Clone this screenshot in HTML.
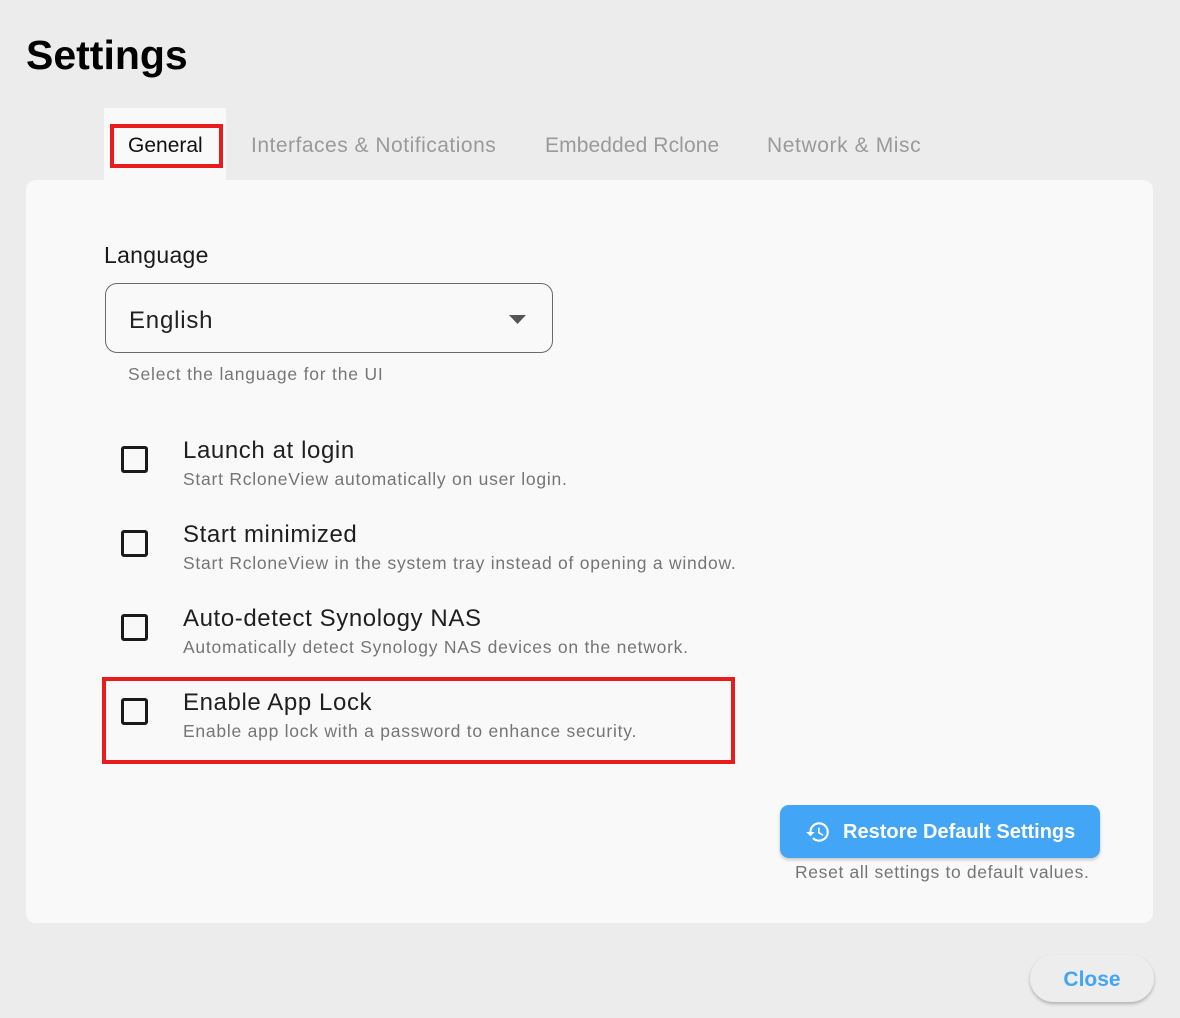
<!DOCTYPE html>
<html><head><meta charset="utf-8"><style>
*{margin:0;padding:0;box-sizing:border-box}
body{width:1180px;height:1018px;background:#ececec;font-family:"Liberation Sans",sans-serif;position:relative;overflow:hidden;color:#1a1a1a}
.a{position:absolute;white-space:nowrap}
.title{left:26px;top:32px;font-size:41px;font-weight:bold;color:#000}
.tabact{left:104px;top:108px;width:122px;height:74px;background:#f9f9f9}
.card{left:26px;top:180px;width:1127px;height:743px;background:#f9f9f9;border-radius:10px}
.tab{top:134px;font-size:21px;color:#9a9a9a;letter-spacing:0.4px}
.red{border:4px solid #e81c1c}
.sel{left:105px;top:283px;width:448px;height:70px;border:1.5px solid #6a6a6a;border-radius:12px}
.cb{left:121px;width:27px;height:27px;border:3px solid #1a1a1a;border-radius:3px}
.t{left:183px;font-size:24px;color:#1f1f1f;letter-spacing:0.6px}
.d{left:183px;font-size:17.5px;color:#757575;letter-spacing:0.75px}
.btn{left:780px;top:805px;width:320px;height:53px;background:#42a5f5;border-radius:9px;box-shadow:0 2px 3px rgba(0,0,0,.2);color:#fff;font-size:20px;font-weight:bold}
.close{left:1030px;top:955px;width:124px;height:47px;border-radius:24px;background:#ededed;box-shadow:0 2px 3px rgba(0,0,0,.25);color:#42a5f5;font-size:21px;font-weight:bold;text-align:center;line-height:49px}
</style></head><body>
<div class="a title">Settings</div>
<div class="a card"></div>
<div class="a tabact"></div>
<div class="a red" style="left:110px;top:124px;width:113px;height:44px"></div>
<div class="a tab" style="left:128px;color:#111;letter-spacing:0">General</div>
<div class="a tab" style="left:251px;letter-spacing:0.5px">Interfaces &amp; Notifications</div>
<div class="a tab" style="left:545px;letter-spacing:0.1px">Embedded Rclone</div>
<div class="a tab" style="left:767px;letter-spacing:0.6px">Network &amp; Misc</div>

<div class="a" style="left:104px;top:242px;font-size:23px;color:#1a1a1a;letter-spacing:0.3px">Language</div>
<div class="a sel"></div>
<div class="a" style="left:129px;top:307px;font-size:24px;color:#222;letter-spacing:0.8px">English</div>
<svg class="a" style="left:509px;top:315px" width="17" height="9"><path d="M0 0H17L8.5 9Z" fill="#555"/></svg>
<div class="a" style="left:128px;top:364px;font-size:17.5px;color:#777;letter-spacing:0.8px">Select the language for the UI</div>

<div class="a cb" style="top:446px"></div>
<div class="a t" style="top:437px">Launch at login</div>
<div class="a d" style="top:469px">Start RcloneView automatically on user login.</div>

<div class="a cb" style="top:530px"></div>
<div class="a t" style="top:521px">Start minimized</div>
<div class="a d" style="top:553px">Start RcloneView in the system tray instead of opening a window.</div>

<div class="a cb" style="top:614px"></div>
<div class="a t" style="top:605px">Auto-detect Synology NAS</div>
<div class="a d" style="top:637px">Automatically detect Synology NAS devices on the network.</div>

<div class="a cb" style="top:698px"></div>
<div class="a t" style="top:689px">Enable App Lock</div>
<div class="a d" style="top:721px">Enable app lock with a password to enhance security.</div>
<div class="a red" style="left:102px;top:677px;width:633px;height:87px"></div>

<div class="a btn">
<svg class="a" style="left:25px;top:14px" width="26" height="26" viewBox="0 0 24 24"><path fill="#fff" d="M13 3a9 9 0 0 0-9 9H1l3.89 3.89.07.14L9 12H6c0-3.87 3.130-7 7-7s7 3.13 7 7-3.13 7-7 7c-1.93 0-3.680-.79-4.940-2.06l-1.420 1.42A8.954 8.954 0 0 0 13 21a9 9 0 0 0 0-18zm-1 5v5l4.28 2.54.72-1.21-3.5-2.08V8H12z"/></svg>
<span class="a" style="left:63px;top:16px">Restore Default Settings</span>
</div>
<div class="a" style="left:795px;top:862px;font-size:17.5px;color:#757575;letter-spacing:0.65px">Reset all settings to default values.</div>

<div class="a close">Close</div>
</body></html>
